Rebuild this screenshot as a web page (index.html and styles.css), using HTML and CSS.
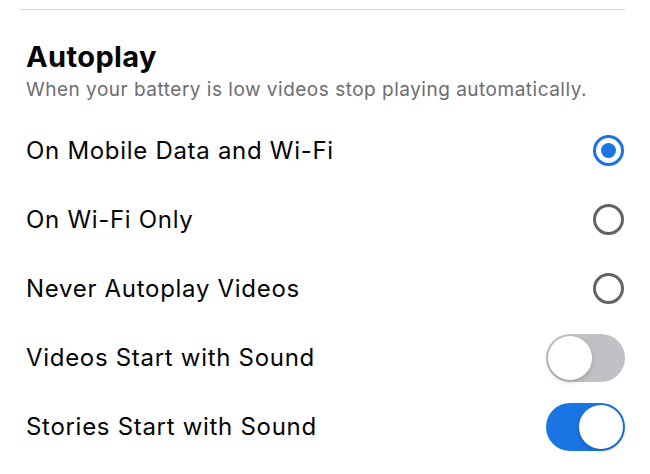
FILE: index.html
```html
<!DOCTYPE html>
<html lang="en">
<head>
    <meta charset="UTF-8">
    <meta name="viewport" content="width=device-width, initial-scale=1.0">
    <title>Autoplay</title>
    <link rel="stylesheet" href="styles.css">
</head>
<body>
    <div class="settings">
        <hr class="divider">

        <div class="section-head">
            <h2>Autoplay</h2>
            <p>When your battery is low videos stop playing automatically.</p>
        </div>

        <ul class="options">
            <li class="option">
                <span>On Mobile Data and Wi-Fi</span>
                <span class="radio checked"></span>
            </li>
            <li class="option">
                <span>On Wi-Fi Only</span>
                <span class="radio"></span>
            </li>
            <li class="option">
                <span>Never Autoplay Videos</span>
                <span class="radio"></span>
            </li>
            <li class="option">
                <span>Videos Start with Sound</span>
                <span class="switch"></span>
            </li>
            <li class="option">
                <span>Stories Start with Sound</span>
                <span class="switch on"></span>
            </li>
        </ul>
    </div>
</body>
</html>
```

FILE: styles.css
```css
* {
    margin: 0;
    padding: 0;
    box-sizing: border-box;
}

body {
    font-family: 'Inter', 'Noto Sans', sans-serif;
    background: #ffffff;
    color: #050505;
}

.settings {
    padding: 9px 25px 0 20px;
}

.divider {
    border: none;
    border-top: 1px solid #d9d9dc;
}

.section-head {
    padding: 30px 0 0 6px;
}

.section-head h2 {
    font-size: 29px;
    font-weight: 700;
    line-height: 34px;
    letter-spacing: 0.4px;
}

.section-head p {
    margin-top: 5px;
    font-size: 19px;
    line-height: 22px;
    letter-spacing: 0.5px;
    color: #6d6d72;
}

.options {
    list-style: none;
    padding-left: 6px;
    margin-top: 15px;
}

.option {
    height: 69px;
    display: flex;
    align-items: center;
    justify-content: space-between;
    font-size: 24px;
    letter-spacing: 0.7px;
}

/* radio buttons */
.radio {
    width: 31px;
    height: 31px;
    border: 3px solid #646467;
    border-radius: 50%;
    display: flex;
    align-items: center;
    justify-content: center;
    margin-right: 1px;
}

.radio.checked {
    border-color: #1b74e4;
}

.radio.checked::after {
    content: "";
    width: 15px;
    height: 15px;
    border-radius: 50%;
    background: #1b74e4;
}

/* toggles */
.switch {
    width: 79px;
    height: 48px;
    border-radius: 24px;
    background: #c0c0c5;
    padding: 2px;
    display: flex;
}

.switch::after {
    content: "";
    width: 44px;
    height: 44px;
    border-radius: 50%;
    background: #ffffff;
    box-shadow: 0 2px 5px rgba(0, 0, 0, 0.18);
}

.switch.on {
    background: #1b74e4;
    justify-content: flex-end;
}
```
